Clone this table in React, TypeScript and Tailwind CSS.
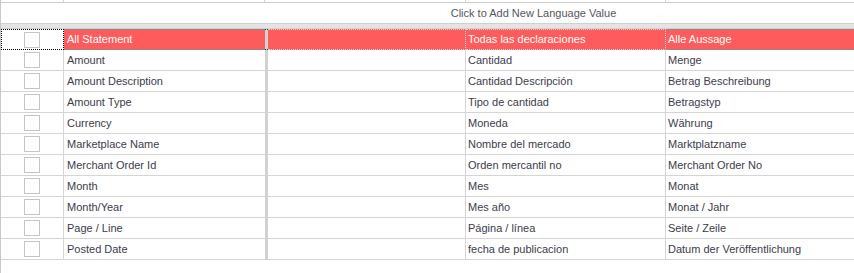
const rows: Array<[string, string, string]> = [
  ["All Statement", "Todas las declaraciones", "Alle Aussage"],
  ["Amount", "Cantidad", "Menge"],
  ["Amount Description", "Cantidad Descripción", "Betrag Beschreibung"],
  ["Amount Type", "Tipo de cantidad", "Betragstyp"],
  ["Currency", "Moneda", "Währung"],
  ["Marketplace Name", "Nombre del mercado", "Marktplatzname"],
  ["Merchant Order Id", "Orden mercantil no", "Merchant Order No"],
  ["Month", "Mes", "Monat"],
  ["Month/Year", "Mes año", "Monat / Jahr"],
  ["Page / Line", "Página / línea", "Seite / Zeile"],
  ["Posted Date", "fecha de publicacion", "Datum der Veröffentlichung"],
];

function Row({ cells, selected }: { cells: [string, string, string]; selected: boolean }) {
  const cell = selected
    ? "bg-[#fd5b5c] text-white border-y border-dotted border-[#3aa9a9]"
    : "border-b border-[#d5d5d5]";
  return (
    <div className="flex h-[21px]">
      <div
        className={
          selected
            ? "w-[63px] shrink-0 flex items-center justify-center border border-dotted border-black"
            : "w-[63px] shrink-0 flex items-center justify-center border-b border-r border-[#d5d5d5]"
        }
      >
        <div className="w-[16px] h-[16px] border border-[#c4c4c4] bg-white ml-[-1px]" />
      </div>
      <div className={`w-[201px] shrink-0 pl-[3px] flex items-center ${cell}`}>{cells[0]}</div>
      <div
        className={
          selected
            ? "w-[3px] shrink-0 bg-[#d2d2d2] border-y border-dotted border-[#333]"
            : "w-[3px] shrink-0 bg-[#d2d2d2]"
        }
      />
      <div className={`w-[198px] shrink-0 border-r border-[#d5d5d5] ${cell}`} />
      <div className={`w-[200px] shrink-0 pl-[2px] flex items-center border-r border-[#d5d5d5] ${cell}`}>{cells[1]}</div>
      <div className={`flex-1 pl-[2px] flex items-center ${cell}`}>{cells[2]}</div>
    </div>
  );
}

export default function App() {
  return (
    <div className="w-[854px] h-[273px] bg-white overflow-hidden border-l border-[#c8c8c8] font-['Liberation_Sans',Tahoma,sans-serif] text-[11px] text-[#3c3c4c]">
      <div className="flex h-[3px] border-b border-[#cdcdcd]">
        <div className="w-[63px] border-r border-[#d5d5d5]" />
        <div className="w-[201px] border-r border-[#d5d5d5]" />
        <div className="w-[201px] border-r border-[#d5d5d5]" />
        <div className="w-[200px] border-r border-[#d5d5d5]" />
        <div className="flex-1" />
      </div>
      <div className="h-[20px] flex items-center justify-center pl-[212px] text-[#555560]">
        Click to Add New Language Value
      </div>
      <div className="h-[6px] bg-[#e4e4e4] border-y border-[#d0d0d0]" />
      {rows.map((r, i) => (
        <Row key={r[0]} cells={r} selected={i === 0} />
      ))}
    </div>
  );
}
